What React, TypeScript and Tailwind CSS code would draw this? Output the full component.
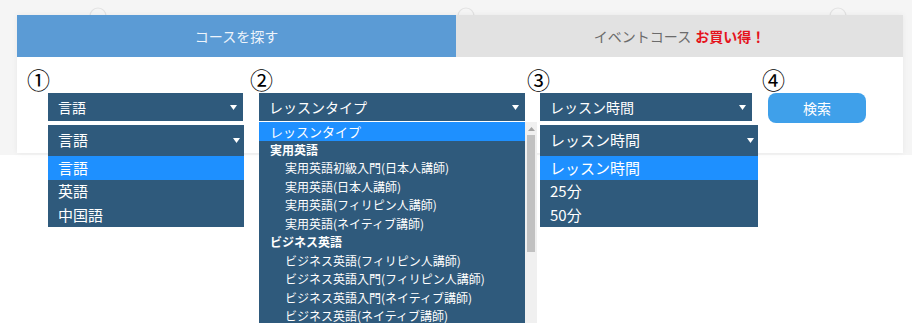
import React from "react";

const FONT = { fontFamily: '"Noto Sans CJK JP", "Noto Sans", sans-serif' };

function Caret() {
  return (
    <svg width="7" height="5" viewBox="0 0 7 5" className="shrink-0">
      <path d="M0 0 L7 0 L3.5 5 Z" fill="#ffffff" />
    </svg>
  );
}

function Closed({ label }: { label: string }) {
  return (
    <div className="flex h-[28px] items-center justify-between bg-[#2f5a7c] pl-[10px] pr-[6px] text-[14px] text-white">
      <span>{label}</span>
      <Caret />
    </div>
  );
}

function OpenSelect({ label, items, className }: { label: string; items: string[]; className: string }) {
  return (
    <div className={`absolute top-[32px] left-0 z-10 bg-[#2f5a7c] text-[15px] text-white ${className}`}>
      <div className="flex h-[31px] items-center justify-between pl-[10px] pr-[4px]">
        <span>{label}</span>
        <Caret />
      </div>
      {items.map((it, i) => (
        <div key={it} className={`flex h-[23.5px] items-center pl-[10px] ${i === 0 ? "bg-[#1e90ff]" : ""}`}>
          {it}
        </div>
      ))}
    </div>
  );
}

const typeRows: { t: string; kind: "sel" | "group" | "item" }[] = [
  { t: "レッスンタイプ", kind: "sel" },
  { t: "実用英語", kind: "group" },
  { t: "実用英語初級入門(日本人講師)", kind: "item" },
  { t: "実用英語(日本人講師)", kind: "item" },
  { t: "実用英語(フィリピン人講師)", kind: "item" },
  { t: "実用英語(ネイティブ講師)", kind: "item" },
  { t: "ビジネス英語", kind: "group" },
  { t: "ビジネス英語(フィリピン人講師)", kind: "item" },
  { t: "ビジネス英語入門(フィリピン人講師)", kind: "item" },
  { t: "ビジネス英語入門(ネイティブ講師)", kind: "item" },
  { t: "ビジネス英語(ネイティブ講師)", kind: "item" },
];

function TypeList() {
  return (
    <div className="absolute top-[29px] left-0 z-10 flex h-[203px] w-[278px] overflow-hidden">
      <div className="flex-1 bg-[#2f5a7c] text-[12px] text-white">
        {typeRows.map((r) => (
          <div
            key={r.t}
            className={`flex h-[18.5px] items-center whitespace-nowrap ${
              r.kind === "sel" ? "bg-[#1e90ff] pl-[11px] text-[13px]" : r.kind === "group" ? "pl-[11px] font-bold" : "pl-[26px]"
            }`}
          >
            {r.t}
          </div>
        ))}
      </div>
      <div className="flex w-[12px] flex-col items-center bg-[#f0f0f0] pt-[5px]">
        <svg width="7" height="4" viewBox="0 0 7 4">
          <path d="M0 4 L3.5 0 L7 4 Z" fill="#a3a3a3" />
        </svg>
        <div className="mt-[4px] h-[117px] w-[8px] bg-[#c1c1c1]" />
      </div>
    </div>
  );
}

function Num({ n }: { n: string }) {
  return <div className="h-[26px] text-[23px] leading-[24px] text-black">{n}</div>;
}

export default function App() {
  return (
    <div className="relative h-[323px] w-[912px] overflow-hidden bg-white" style={FONT}>
      <div className="relative h-[155px] bg-[#f5f5f5] pt-[15px] pl-[17px] pr-[9px]">
        {/* faint decoration at the top */}
        <svg className="absolute top-0 left-0" width="912" height="20" viewBox="0 0 912 20" fill="none">
          <path d="M90 16 A8 8 0 0 1 106 16" stroke="#e2e2e2" strokeWidth="1.2" />
          <path d="M458 16 A8 8 0 0 1 474 16" stroke="#e2e2e2" strokeWidth="1.2" />
          <path d="M830 16 A8 8 0 0 1 846 16" stroke="#e2e2e2" strokeWidth="1.2" />
        </svg>
        <div className="relative h-[138px] bg-white shadow-[0_0_6px_rgba(0,0,0,0.06)]">
          <div className="flex h-[42px]">
            <div className="flex w-[439px] items-center justify-center bg-[#5b9bd5] text-[14px] text-[#eef4fb]">
              コースを探す
            </div>
            <div className="flex flex-1 items-center justify-center bg-[#e2e2e2] text-[14px] text-[#6b6b6b]">
              イベントコース
              <span className="ml-[4px] font-bold text-[#e5141c]">お買い得！</span>
            </div>
          </div>
          <div className="flex pt-[10px] pl-[10px]">
            <div className="w-[223px]">
              <Num n="①" />
              <div className="relative ml-[21px] w-[195px]">
                <Closed label="言語" />
                <OpenSelect label="言語" items={["言語", "英語", "中国語"]} className="w-[196px]" />
              </div>
            </div>
            <div className="w-[277px]">
              <Num n="②" />
              <div className="relative ml-[9px] w-[266px]">
                <Closed label="レッスンタイプ" />
                <TypeList />
              </div>
            </div>
            <div className="w-[235px]">
              <Num n="③" />
              <div className="relative ml-[13px] w-[212px]">
                <Closed label="レッスン時間" />
                <OpenSelect label="レッスン時間" items={["レッスン時間", "25分", "50分"]} className="w-[218px]" />
              </div>
            </div>
            <div>
              <Num n="④" />
              <button className="ml-[6px] flex h-[30px] w-[98px] items-center justify-center rounded-[8px] bg-[#3fa0ea] text-[14px] text-white">
                検索
              </button>
            </div>
          </div>
        </div>
      </div>
    </div>
  );
}
